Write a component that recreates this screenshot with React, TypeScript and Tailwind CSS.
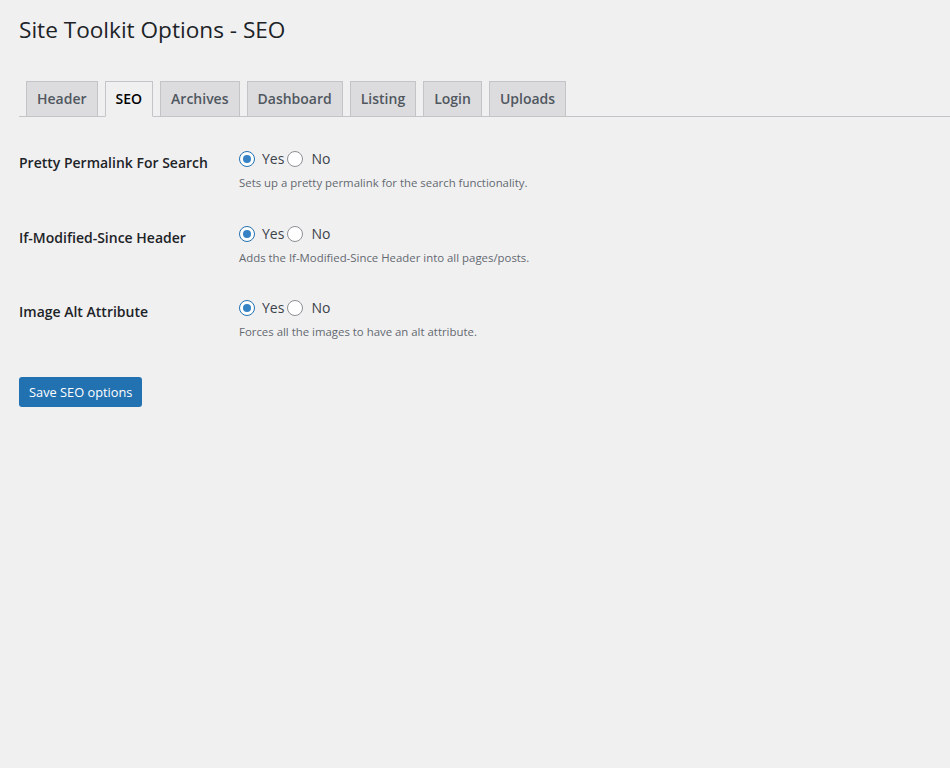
import React from "react";

const tabs = ["Header", "SEO", "Archives", "Dashboard", "Listing", "Login", "Uploads"];

const rows = [
  { label: "Pretty Permalink For Search", desc: "Sets up a pretty permalink for the search functionality." },
  { label: "If-Modified-Since Header", desc: "Adds the If-Modified-Since Header into all pages/posts." },
  { label: "Image Alt Attribute", desc: "Forces all the images to have an alt attribute." },
];

function Radio({ checked }: { checked: boolean }) {
  return (
    <span
      className={
        "flex h-4 w-4 shrink-0 items-center justify-center rounded-full border bg-white " +
        (checked ? "border-[#2271b1]" : "border-[#8c8f94]")
      }
    >
      {checked && <span className="h-2 w-2 rounded-full bg-[#3582c4]" />}
    </span>
  );
}

export default function App() {
  return (
    <div
      className="min-h-screen bg-[#f0f0f1] pl-[19px] text-[#1d2327]"
      style={{ fontFamily: '"Open Sans", "Noto Sans", sans-serif' }}
    >
      <h1 className="pt-[15px] text-[22.6px] font-normal leading-[30px] text-[#1d2327]">
        Site Toolkit Options - SEO
      </h1>
      <div className="mt-[36px] flex border-b border-[#c3c4c7]">
        {tabs.map((t) => {
          const active = t === "SEO";
          return (
            <div
              key={t}
              className={
                "-mb-px ml-[7px] border px-[10px] py-[5px] text-[14px] font-semibold leading-6 " +
                (active
                  ? "border-[#c3c4c7] border-b-[#f0f0f1] bg-[#f0f0f1] text-black"
                  : "border-[#c3c4c7] bg-[#dcdcde] text-[#50575e]")
              }
            >
              {t}
            </div>
          );
        })}
      </div>
      <div className="mt-[17px]">
        {rows.map((r) => (
          <div key={r.label} className="flex h-[74.5px]">
            <div className="w-[220px] shrink-0 pt-[20px] text-[14px] font-semibold leading-[18px] text-[#1d2327]">
              {r.label}
            </div>
            <div className="pt-[15px]">
              <div className="flex items-center text-[14px] leading-5 text-[#3c434a]">
                <Radio checked />
                <span className="ml-[7px] mr-[3px]">Yes</span>
                <Radio checked={false} />
                <span className="ml-[8px]">No</span>
              </div>
              <p className="mt-[4px] text-[11.4px] leading-5 text-[#646970]">{r.desc}</p>
            </div>
          </div>
        ))}
      </div>
      <button className="mt-[19px] h-[30px] rounded-[3px] bg-[#2271b1] px-[10px] text-[12.8px] leading-[28px] text-white">
        Save SEO options
      </button>
    </div>
  );
}
